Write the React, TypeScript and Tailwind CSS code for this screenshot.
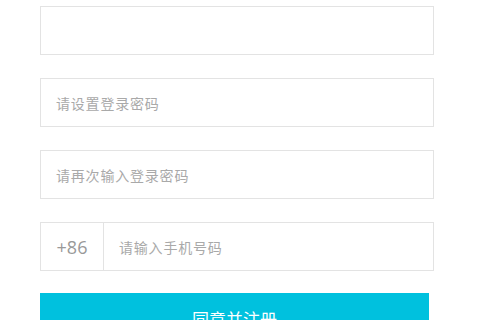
import React from "react";

export default function App() {
  const font = { fontFamily: '"Microsoft YaHei", "Noto Sans CJK SC", "Noto Sans", sans-serif' };
  return (
    <div className="w-[480px] h-[320px] bg-white overflow-hidden" style={font}>
      <div className="ml-[40px] w-[394px] pt-[6px] flex flex-col gap-[23px]">
        <div className="h-[49px] border border-[#e3e3e3] bg-white" />
        <div className="h-[49px] border border-[#e3e3e3] bg-white flex items-center pl-[15px]">
          <span className="text-[14px] tracking-[0.8px] text-[#a9a9a9] leading-none">请设置登录密码</span>
        </div>
        <div className="h-[49px] border border-[#e3e3e3] bg-white flex items-center pl-[15px]">
          <span className="text-[14px] tracking-[0.8px] text-[#a9a9a9] leading-none">请再次输入登录密码</span>
        </div>
        <div className="h-[49px] border border-[#e3e3e3] bg-white flex">
          <div className="w-[63px] border-r border-[#e3e3e3] flex items-center justify-center">
            <span className="text-[18px] text-[#999] leading-none" style={{ fontFamily: '"Open Sans", "Noto Sans", sans-serif' }}>+86</span>
          </div>
          <div className="flex items-center pl-[15px]">
            <span className="text-[14px] tracking-[0.8px] text-[#a9a9a9] leading-none">请输入手机号码</span>
          </div>
        </div>
        <div className="w-[389px] h-[50px] bg-[#00c1de] flex items-center justify-center -mt-[1px]">
          <span className="text-[17px] text-white leading-none">同意并注册</span>
        </div>
      </div>
    </div>
  );
}
